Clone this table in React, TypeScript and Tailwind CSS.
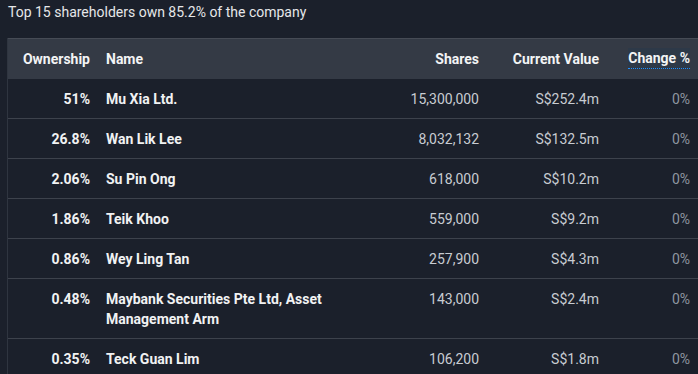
import React from "react";

interface Holder {
  ownership: string;
  name: string;
  shares: string;
  value: string;
  change: string;
}

const holders: Holder[] = [
  { ownership: "51%", name: "Mu Xia Ltd.", shares: "15,300,000", value: "S$252.4m", change: "0%" },
  { ownership: "26.8%", name: "Wan Lik Lee", shares: "8,032,132", value: "S$132.5m", change: "0%" },
  { ownership: "2.06%", name: "Su Pin Ong", shares: "618,000", value: "S$10.2m", change: "0%" },
  { ownership: "1.86%", name: "Teik Khoo", shares: "559,000", value: "S$9.2m", change: "0%" },
  { ownership: "0.86%", name: "Wey Ling Tan", shares: "257,900", value: "S$4.3m", change: "0%" },
  {
    ownership: "0.48%",
    name: "Maybank Securities Pte Ltd, Asset Management Arm",
    shares: "143,000",
    value: "S$2.4m",
    change: "0%",
  },
  { ownership: "0.35%", name: "Teck Guan Lim", shares: "106,200", value: "S$1.8m", change: "0%" },
];

export default function App() {
  return (
    <div className="min-h-screen w-full overflow-hidden bg-[#1b202b] font-['Roboto','Liberation_Sans',sans-serif] text-sm">
      <p className="pl-2 leading-6 text-[#e6e7e9]">Top 15 shareholders own 85.2% of the company</p>

      <div className="ml-[7px] mt-[14px] border-l border-[#2f3540]">
        <table className="w-[691px] table-fixed border-collapse">
          <colgroup>
            <col className="w-[90px]" />
            <col className="w-[269px]" />
            <col className="w-[120px]" />
            <col className="w-[120px]" />
            <col className="w-[92px]" />
          </colgroup>
          <thead>
            <tr className="border-t border-[#464b55] bg-[#343a45] font-bold text-[#f3f4f5]">
              <th className="h-[40px] pr-2 text-right align-middle font-bold">Ownership</th>
              <th className="pl-2 text-left font-bold">Name</th>
              <th className="pr-2 text-right font-bold">Shares</th>
              <th className="pr-2 text-right font-bold">Current Value</th>
              <th className="pr-[9px] text-right font-bold">
                <span className="inline-block border-b border-dotted border-[#1e8fff] bg-[#2d3948] leading-[20px]">
                  Change %
                </span>
              </th>
            </tr>
          </thead>
          <tbody>
            {holders.map((h) => (
              <tr key={h.name} className="border-b border-[#3d424c] align-top leading-5">
                <td className="pb-[9px] pr-2 pt-[10px] text-right font-bold text-[#f1f2f3]">{h.ownership}</td>
                <td className="pb-[9px] pl-2 pt-[10px] font-bold text-[#f1f2f3]">{h.name}</td>
                <td className="pb-[9px] pr-2 pt-[10px] text-right text-[#c8ccd2]">{h.shares}</td>
                <td className="pb-[9px] pr-2 pt-[10px] text-right text-[#c8ccd2]">{h.value}</td>
                <td className="pb-[9px] pr-[9px] pt-[10px] text-right text-[#8f96a0]">{h.change}</td>
              </tr>
            ))}
          </tbody>
        </table>
      </div>
    </div>
  );
}
